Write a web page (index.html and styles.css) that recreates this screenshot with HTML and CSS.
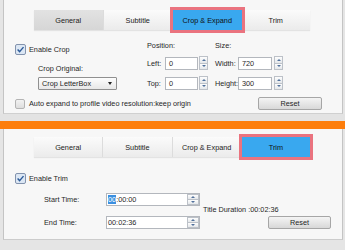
FILE: index.html
```html
<!DOCTYPE html>
<html lang="en">
<head>
  <meta charset="UTF-8">
  <title>Crop and Trim Settings</title>
  <link rel="stylesheet" href="styles.css">
</head>
<body>
  <section class="panel panel-crop">
    <div class="tabs">
      <div class="tab tab-dim">General</div>
      <div class="tab">Subtitle</div>
      <div class="tab is-active">Crop &amp; Expand</div>
      <div class="tab">Trim</div>
    </div>

    <div class="crop-body">
      <div class="crop-left">
        <div class="check">
          <svg class="box" width="11" height="11" viewBox="0 0 11 11"><rect x="0.5" y="0.5" width="10" height="10" rx="1.5" fill="#dce7f4" stroke="#8393ad"/><path d="M2.6 5.5 L4.6 7.6 L8.5 3.1" fill="none" stroke="#2c5a98" stroke-width="1.4"/></svg>
          <span>Enable Crop</span>
        </div>
        <div class="field-label">Crop Original:</div>
        <div class="select"><span>Crop LetterBox</span><span class="caret"></span></div>
      </div>

      <div class="group group-pos">
        <div class="group-head">Position:</div>
        <div class="row"><span class="row-label">Left:</span><span class="input">0</span><span class="spin"><span class="up"></span><span class="dn"></span></span></div>
        <div class="row"><span class="row-label">Top:</span><span class="input">0</span><span class="spin"><span class="up"></span><span class="dn"></span></span></div>
      </div>

      <div class="group group-size">
        <div class="group-head">Size:</div>
        <div class="row"><span class="row-label">Width:</span><span class="input">720</span><span class="spin"><span class="up"></span><span class="dn"></span></span></div>
        <div class="row"><span class="row-label">Height:</span><span class="input">300</span><span class="spin"><span class="up"></span><span class="dn"></span></span></div>
      </div>
    </div>

    <div class="crop-foot">
      <div class="check">
        <span class="box-empty"></span>
        <span>Auto expand to profile video resolution:keep origin</span>
      </div>
      <button class="btn btn-crop">Reset</button>
    </div>
  </section>

  <div class="strip"></div>
  <div class="divider"></div>

  <section class="panel panel-trim">
    <div class="tabs">
      <div class="tab">General</div>
      <div class="tab">Subtitle</div>
      <div class="tab">Crop &amp; Expand</div>
      <div class="tab is-active">Trim</div>
    </div>

    <div class="trim-body">
      <div class="check">
        <svg class="box" width="11" height="11" viewBox="0 0 11 11"><rect x="0.5" y="0.5" width="10" height="10" rx="1.5" fill="#dce7f4" stroke="#8393ad"/><path d="M2.6 5.5 L4.6 7.6 L8.5 3.1" fill="none" stroke="#2c5a98" stroke-width="1.4"/></svg>
        <span>Enable Trim</span>
      </div>

      <div class="trim-grid">
        <div class="trim-fields">
          <div class="trim-row">
            <span class="trim-label">Start Time:</span>
            <span class="time-input"><span class="time-text"><span class="sel">00</span>:00:00</span><span class="spin spin-in"><span class="up"></span><span class="dn"></span></span></span>
          </div>
          <div class="trim-row">
            <span class="trim-label">End Time:</span>
            <span class="time-input"><span class="time-text">00:02:36</span><span class="spin spin-in"><span class="up"></span><span class="dn"></span></span></span>
          </div>
        </div>
        <div class="trim-side">
          <div class="duration">Title Duration :00:02:36</div>
          <button class="btn btn-trim">Reset</button>
        </div>
      </div>
    </div>
  </section>
</body>
</html>
```

FILE: styles.css
```css
* {
  box-sizing: border-box;
}
body {
  margin: 0;
  width: 345px;
  height: 250px;
  overflow: hidden;
  background: #e5e5e5;
  font-family: 'Liberation Sans', Arial, sans-serif;
  font-size: 7.3px;
  color: #1f1f1f;
}
.panel {
  margin: 0 2px 0 3px;
  background: #f7f7f7;
  border-left: 1px solid #c4c4c4;
  border-right: 1px solid #c4c4c4;
}
.panel-crop {
  height: 114px;
  padding-top: 10px;
  border-bottom: 1px solid #d0d0d0;
}
.strip {
  height: 7px;
  background: #e3e3e3;
}
.divider {
  height: 8px;
  background: #fd7e0c;
}
.panel-trim {
  height: 111px;
  padding-top: 8px;
  border-bottom: 1px solid #cccccc;
}

/* tabs */
.tabs {
  display: flex;
  margin-left: 30px;
  width: 276px;
  height: 20px;
  background: linear-gradient(#fbfbfb, #ebebeb);
  box-shadow: 0 1px 1px rgba(0, 0, 0, 0.08);
}
.tab {
  flex: 1;
  display: flex;
  align-items: center;
  justify-content: center;
  border-right: 1px solid #dcdcdc;
  color: #222;
}
.tab:last-child {
  border-right: none;
}
.tab-dim {
  background: linear-gradient(#e2e2e2, #d6d6d6);
}
.tab.is-active {
  position: relative;
  z-index: 1;
  background: #39a8ef;
  border-right: none;
  outline: 3px solid #ea737f;
  color: #111;
}

/* checkboxes */
.check {
  display: flex;
  align-items: center;
  gap: 3px;
  height: 11px;
  line-height: 11px;
}
.box {
  display: block;
  flex: none;
}
.box-empty {
  flex: none;
  width: 10px;
  height: 10px;
  margin-right: 1px;
  border: 1px solid #b4b4b4;
  border-radius: 2px;
  background: linear-gradient(#f2f2f2, #dedede);
}

/* crop panel */
.crop-body {
  display: flex;
  margin-top: 11px;
  padding-left: 11px;
  height: 49px;
}
.crop-left {
  width: 132px;
  padding-top: 3px;
}
.field-label {
  margin: 9px 0 0 23px;
  height: 10px;
  line-height: 10px;
}
.select {
  display: flex;
  align-items: center;
  justify-content: space-between;
  width: 79px;
  height: 13px;
  margin: 3px 0 0 23px;
  padding: 0 3px;
  border: 1px solid #909090;
  border-radius: 1px;
  background: linear-gradient(#fdfdfd, #e7e7e7);
}
.caret {
  width: 0;
  height: 0;
  border-left: 2.5px solid transparent;
  border-right: 2.5px solid transparent;
  border-top: 3px solid #222;
  margin-right: 1px;
}
.group-head {
  height: 10px;
  line-height: 10px;
}
.row {
  display: flex;
  align-items: center;
  height: 14px;
  margin-top: 5px;
}
.row + .row {
  margin-top: 6px;
}
.group-size {
  margin-left: 7px;
}
.group-pos .row-label {
  width: 18px;
}
.group-size .row-label {
  width: 23px;
}
.input {
  height: 13px;
  line-height: 11px;
  padding-left: 3px;
  border: 1px solid #b3b7bd;
  background: #fff;
}
.group-pos .input {
  width: 33px;
  margin-right: 1px;
}
.group-size .input {
  width: 34px;
  margin-right: 2px;
}

/* spinners */
.spin {
  display: flex;
  flex-direction: column;
  width: 9px;
  height: 14px;
}
.spin span {
  flex: 1;
  display: flex;
  align-items: center;
  justify-content: center;
  border: 1px solid #bcc1c8;
  background: linear-gradient(#fdfdfd, #e4e7ea);
}
.spin span + span {
  border-top: none;
}
.spin span::before {
  content: '';
  border-left: 2px solid transparent;
  border-right: 2px solid transparent;
}
.spin .up::before {
  border-bottom: 2px solid #50709b;
}
.spin .dn::before {
  border-top: 2px solid #50709b;
}

.crop-foot {
  display: flex;
  align-items: center;
  justify-content: space-between;
  height: 13px;
  margin-top: 7px;
  padding: 0 20px 0 11px;
}
.btn {
  height: 13px;
  padding: 0;
  font-family: inherit;
  font-size: 7.3px;
  color: #1f1f1f;
  border: 1px solid #a6a6a6;
  border-radius: 2px;
  background: linear-gradient(#f4f4f4, #d8d8d8);
}
.btn-crop {
  width: 64px;
}

/* trim panel */
.trim-body {
  margin-top: 16px;
  padding-left: 11px;
}
.trim-grid {
  display: flex;
  margin: 9px 0 0 29px;
}
.trim-row {
  display: flex;
  align-items: center;
  height: 13px;
}
.trim-row + .trim-row {
  margin-top: 10px;
}
.trim-label {
  width: 62px;
}
.time-input {
  display: flex;
  align-items: center;
  justify-content: space-between;
  width: 94px;
  height: 13px;
  padding: 0 0 0 1px;
  border: 1px solid #b3b7bd;
  background: #fff;
}
.sel {
  background: #3b8fe0;
  color: #fff;
}
.spin-in {
  width: 12px;
  height: 11px;
}
.trim-side {
  margin-left: 3px;
  padding-top: 12px;
}
.duration {
  height: 10px;
  line-height: 10px;
}
.btn-trim {
  display: block;
  width: 63px;
  margin: 1px 0 0 65px;
}
```
